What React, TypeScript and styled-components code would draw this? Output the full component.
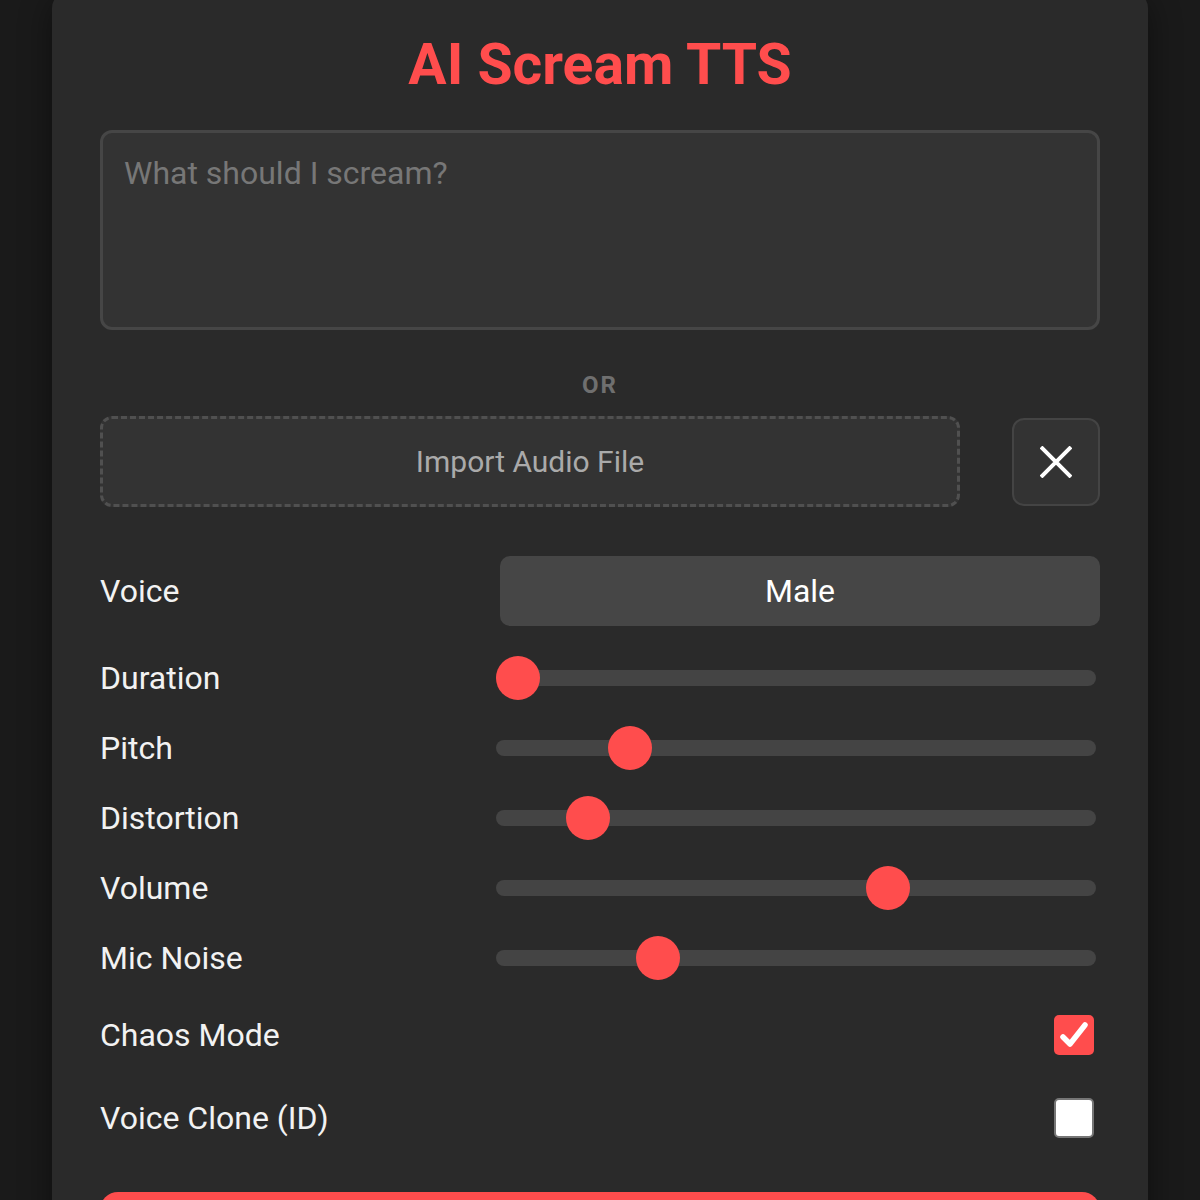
import React, { useState } from 'react';
import styled, { createGlobalStyle } from 'styled-components';

const GlobalStyle = createGlobalStyle`
    html, body {
        margin: 0;
        padding: 0;
        background: #1a1a1a;
        font-family: Roboto, "Liberation Sans", Arial, sans-serif;
    }
    * {
        box-sizing: border-box;
    }
`;

const Page = styled.div`
    width: 100%;
    display: flex;
    justify-content: center;
`;

const Card = styled.div`
    width: 1096px;
    margin-top: -8px;
    padding: 38px 48px 48px;
    background: #2a2a2a;
    border-radius: 16px;
    box-shadow: 0 8px 32px rgba(0, 0, 0, 0.45);
    display: flex;
    flex-direction: column;
`;

const Title = styled.h1`
    margin: 0 0 30px;
    font-size: 57px;
    line-height: 70px;
    font-weight: 700;
    color: #ff4d4d;
    text-align: center;
`;

const ScreamInput = styled.textarea`
    width: 100%;
    height: 200px;
    padding: 21px 21px;
    background: #333333;
    border: 3px solid #464646;
    border-radius: 12px;
    color: #eeeeee;
    font-family: inherit;
    font-size: 32px;
    resize: none;
    outline: none;

    &::placeholder {
        color: #777777;
    }
`;

const Divider = styled.div`
    margin: 40px 0 16px;
    text-align: center;
    font-size: 24px;
    line-height: 30px;
    font-weight: 700;
    letter-spacing: 2px;
    color: #6f6f6f;
`;

const ImportRow = styled.div`
    display: flex;
    align-items: center;
    gap: 52px;
`;

const DropZone = styled.button`
    flex: 1;
    height: 91px;
    background: #333333;
    border: 3px dashed #505050;
    border-radius: 12px;
    color: #aaaaaa;
    font-family: inherit;
    font-size: 30px;
    cursor: pointer;
`;

const ClearButton = styled.button`
    width: 88px;
    height: 88px;
    display: flex;
    align-items: center;
    justify-content: center;
    background: #333333;
    border: 2px solid #444444;
    border-radius: 12px;
    cursor: pointer;
    padding: 0;
`;

const Settings = styled.div`
    margin-top: 49px;
    display: flex;
    flex-direction: column;
`;

const Row = styled.div<{ $height: number; $gapAfter?: number }>`
    height: ${p => p.$height}px;
    margin-bottom: ${p => p.$gapAfter || 0}px;
    display: grid;
    grid-template-columns: 400px 600px;
    align-items: center;
`;

const Label = styled.span`
    font-size: 32px;
    color: #f2f2f2;
`;

const SelectButton = styled.button`
    height: 70px;
    width: 100%;
    background: #464646;
    border: none;
    border-radius: 10px;
    color: #ffffff;
    font-family: inherit;
    font-size: 32px;
    cursor: pointer;
`;

const Range = styled.input`
    -webkit-appearance: none;
    appearance: none;
    width: 600px;
    height: 44px;
    margin: 0 0 0 -4px;
    background: transparent;
    cursor: pointer;

    &::-webkit-slider-runnable-track {
        height: 16px;
        border-radius: 8px;
        background: #444444;
    }

    &::-webkit-slider-thumb {
        -webkit-appearance: none;
        width: 44px;
        height: 44px;
        margin-top: -14px;
        border-radius: 50%;
        background: #ff4d4d;
        border: none;
    }
`;

const CheckCell = styled.div`
    display: flex;
    justify-content: flex-end;
    padding-right: 6px;
`;

const CheckBox = styled.button<{ $checked: boolean }>`
    width: 40px;
    height: 40px;
    padding: 0;
    border-radius: 5px;
    display: flex;
    align-items: center;
    justify-content: center;
    cursor: pointer;
    background: ${p => (p.$checked ? '#ff4d4d' : '#ffffff')};
    border: ${p => (p.$checked ? 'none' : '2px solid #767676')};
`;

const GenerateButton = styled.button`
    margin-top: 33px;
    height: 110px;
    width: 100%;
    background: #ff4d4d;
    border: none;
    border-radius: 18px;
    color: #ffffff;
    font-family: inherit;
    font-size: 32px;
    font-weight: 700;
`;

const sliderDefaults = [
    { key: 'duration', label: 'Duration', value: 0 },
    { key: 'pitch', label: 'Pitch', value: 20.2 },
    { key: 'distortion', label: 'Distortion', value: 12.6 },
    { key: 'volume', label: 'Volume', value: 66.5 },
    { key: 'noise', label: 'Mic Noise', value: 25.2 },
];

const CloseGlyph = () => (
    <svg width="32" height="32" viewBox="0 0 32 32">
        <path d="M1 1 L31 31 M31 1 L1 31" stroke="#ffffff" strokeWidth="4" fill="none" />
    </svg>
);

const CheckGlyph = () => (
    <svg width="40" height="40" viewBox="0 0 40 40">
        <path d="M9 22 L16 29 L31 10" stroke="#ffffff" strokeWidth="5.5" strokeLinecap="round" strokeLinejoin="round" fill="none" />
    </svg>
);

const App: React.FC = () => {
    const [text, setText] = useState('');
    const [values, setValues] = useState<Record<string, number>>(
        Object.fromEntries(sliderDefaults.map(s => [s.key, s.value]))
    );
    const [chaos, setChaos] = useState(true);
    const [clone, setClone] = useState(false);

    return (
        <Page>
            <GlobalStyle />
            <Card>
                <Title>AI Scream TTS</Title>
                <ScreamInput
                    placeholder="What should I scream?"
                    value={text}
                    onChange={e => setText(e.target.value)}
                />
                <Divider>OR</Divider>
                <ImportRow>
                    <DropZone>Import Audio File</DropZone>
                    <ClearButton aria-label="Clear audio">
                        <CloseGlyph />
                    </ClearButton>
                </ImportRow>

                <Settings>
                    <Row $height={70} $gapAfter={17}>
                        <Label>Voice</Label>
                        <SelectButton>Male</SelectButton>
                    </Row>
                    {sliderDefaults.map(s => (
                        <Row key={s.key} $height={70}>
                            <Label>{s.label}</Label>
                            <Range
                                type="range"
                                min={0}
                                max={100}
                                step="any"
                                value={values[s.key]}
                                onChange={e => setValues({ ...values, [s.key]: Number(e.target.value) })}
                            />
                        </Row>
                    ))}
                    <Row $height={83}>
                        <Label>Chaos Mode</Label>
                        <CheckCell>
                            <CheckBox $checked={chaos} onClick={() => setChaos(!chaos)}>
                                {chaos && <CheckGlyph />}
                            </CheckBox>
                        </CheckCell>
                    </Row>
                    <Row $height={83}>
                        <Label>Voice Clone (ID)</Label>
                        <CheckCell>
                            <CheckBox $checked={clone} onClick={() => setClone(!clone)}>
                                {clone && <CheckGlyph />}
                            </CheckBox>
                        </CheckCell>
                    </Row>
                </Settings>

                <GenerateButton>SCREAM!</GenerateButton>
            </Card>
        </Page>
    );
};

export default App;
